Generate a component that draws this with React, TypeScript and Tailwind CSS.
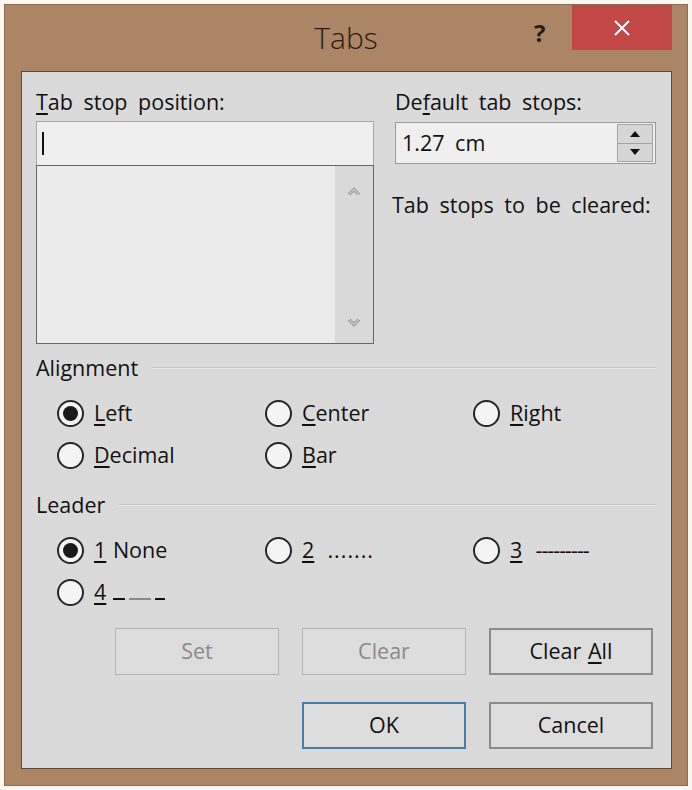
import type { ReactNode } from "react"

const font = { fontFamily: "'Open Sans', 'Noto Sans', sans-serif" }

function U({ children }: { children: ReactNode }) {
  return <span className="underline decoration-[1.5px] underline-offset-[3px]">{children}</span>
}

function Radio({ checked, children }: { checked?: boolean; children: ReactNode }) {
  return (
    <div className="flex items-center gap-[10px] h-[42px]">
      <span className="w-[27px] h-[27px] rounded-full border-2 border-[#262626] bg-[#f4f4f4] flex items-center justify-center shrink-0">
        {checked && <span className="w-[15px] h-[15px] rounded-full bg-[#1a1a1a]" />}
      </span>
      <span className="whitespace-pre [word-spacing:1px]">{children}</span>
    </div>
  )
}

function GroupHeader({ title }: { title: string }) {
  return (
    <div className="flex items-center gap-[14px] h-[28px]">
      <span>{title}</span>
      <div className="flex-1 h-[2px] bg-[#c6c6c6] border-b border-[#e8e8e8]" />
    </div>
  )
}

function Btn({ children, kind = "normal" }: { children: ReactNode; kind?: "normal" | "disabled" | "focus" }) {
  const cls =
    kind === "disabled"
      ? "border border-[#b3b3b3] text-[#8a8a8a]"
      : kind === "focus"
        ? "border-2 border-[#4a7ca6] text-[#111]"
        : "border-2 border-[#8c8c8c] text-[#111]"
  return (
    <div className={`w-[164px] h-[47px] bg-[#dddddd] flex items-center justify-center [word-spacing:1px] ${cls}`}>
      {children}
    </div>
  )
}

function Chevron({ down }: { down?: boolean }) {
  return (
    <svg width="14" height="10" viewBox="0 0 14 10" className={down ? "rotate-180" : ""}>
      <path d="M1 8 L7 2 L13 8 M3 9 L7 5 L11 9" fill="none" stroke="#9c9c9c" strokeWidth="1.1" />
    </svg>
  )
}

export default function App() {
  return (
    <div className="w-[692px] h-[790px] bg-[#fcf6f1] pt-[4px] pl-[4px]" style={font}>
      <div className="w-[684px] h-[782px] bg-[#ab8566] border border-[#8b6b51] flex flex-col">
        {/* title bar */}
        <div className="relative h-[66px] shrink-0">
          <div className="absolute inset-x-0 top-[13px] text-center text-[30px] font-light leading-[40px] text-[#2a1c10]">
            Tabs
          </div>
          <div className="absolute left-[529px] top-[12px] text-[24px] font-bold leading-[32px] text-[#2a1b10]">?</div>
          <div className="absolute left-[567px] top-0 w-[100px] h-[45px] bg-[#c24848] flex items-center justify-center">
            <svg width="18" height="18" viewBox="0 0 18 18">
              <path d="M2 2 L16 16 M16 2 L2 16" stroke="#fff" strokeWidth="2" />
            </svg>
          </div>
        </div>

        {/* client area */}
        <div className="ml-[16px] w-[651px] h-[698px] bg-[#dadada] border border-[#5e4836] pt-[16px] pl-[14px] pr-[15px] text-[21.5px] [word-spacing:5px] text-[#111]">
          <div className="flex gap-[21px]">
            <div className="w-[338px]">
              <div className="h-[28px] leading-[28px]">
                <U>T</U>ab stop position:
              </div>
              <div className="mt-[5px] h-[44px] bg-[#efefef] border border-[#a9a9a9] border-b-0 flex items-center pl-[5px]">
                <div className="w-[2px] h-[23px] bg-[#111]" />
              </div>
              <div className="h-[179px] bg-[#ececec] border border-[#666] flex">
                <div className="flex-1" />
                <div className="w-[38px] bg-[#d9d9d9] flex flex-col items-center justify-between pt-[20px] pb-[15px]">
                  <Chevron />
                  <Chevron down />
                </div>
              </div>
            </div>
            <div className="flex-1">
              <div className="h-[28px] leading-[28px]">
                De<U>f</U>ault tab stops:
              </div>
              <div className="mt-[6px] h-[42px] bg-[#efefef] border border-[#9a9a9a] flex">
                <div className="flex-1 flex items-center pl-[6px]">1.27 cm</div>
                <div className="w-[36px] my-[1px] mr-[2px] flex flex-col border border-[#a3a3a3]">
                  <div className="flex-1 bg-[#d6d6d6] border-b border-[#a3a3a3] flex items-center justify-center">
                    <svg width="10" height="6" viewBox="0 0 10 6"><path d="M0 6 L5 0 L10 6 Z" fill="#111" /></svg>
                  </div>
                  <div className="flex-1 bg-[#d6d6d6] flex items-center justify-center">
                    <svg width="10" height="6" viewBox="0 0 10 6"><path d="M0 0 L5 6 L10 0 Z" fill="#111" /></svg>
                  </div>
                </div>
              </div>
              <div className="mt-[27px] h-[28px] leading-[28px] -ml-[3px]">Tab stops to be cleared:</div>
            </div>
          </div>

          <div className="mt-[10px]">
            <GroupHeader title="Alignment" />
            <div className="ml-[21px] mt-[10px] grid grid-cols-[208px_208px_1fr]">
              <Radio checked>
                <U>L</U>eft
              </Radio>
              <Radio>
                <U>C</U>enter
              </Radio>
              <Radio>
                <U>R</U>ight
              </Radio>
              <Radio>
                <U>D</U>ecimal
              </Radio>
              <Radio>
                <U>B</U>ar
              </Radio>
            </div>
          </div>

          <div className="mt-[15px]">
            <GroupHeader title="Leader" />
            <div className="ml-[21px] mt-[10px] grid grid-cols-[208px_208px_1fr]">
              <Radio checked>
                <U>1</U> None
              </Radio>
              <Radio>
                <U>2</U>  <span className="tracking-[1px]">.......</span>
              </Radio>
              <Radio>
                <U>3</U>  <span className="tracking-[-1px]">---------</span>
              </Radio>
              <Radio>
                <U>4</U>{" "}
                <span className="inline-flex items-end h-[20px] gap-0">
                  <span className="w-[12px] h-[2px] bg-[#111]" />
                  <span className="w-[4px]" />
                  <span className="w-[22px] h-[2px] bg-[#8a8a8a]" />
                  <span className="w-[4px]" />
                  <span className="w-[10px] h-[2px] bg-[#111]" />
                </span>
              </Radio>
            </div>
          </div>

          <div className="mt-[15px] flex justify-end gap-[23px] pr-[3px]">
            <Btn kind="disabled">Set</Btn>
            <Btn kind="disabled">Clear</Btn>
            <Btn>
              <span>
                Clear <U>A</U>ll
              </span>
            </Btn>
          </div>
          <div className="mt-[27px] flex justify-end gap-[23px] pr-[3px]">
            <Btn kind="focus">OK</Btn>
            <Btn>Cancel</Btn>
          </div>
        </div>
      </div>
    </div>
  )
}
